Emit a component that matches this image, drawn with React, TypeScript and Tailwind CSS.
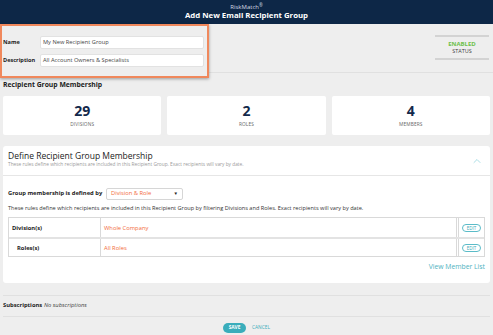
import { ChevronUp } from "lucide-react";

const stats = [
  { value: "29", label: "DIVISIONS" },
  { value: "2", label: "ROLES" },
  { value: "4", label: "MEMBERS" },
];

const rules = [
  { label: "Division(s)", value: "Whole Company", indent: false },
  { label: "Roles(s)", value: "All Roles", indent: true },
];

export default function App() {
  return (
    <div className="w-[493px] h-[335px] overflow-hidden bg-[#eeeeee] text-[#222] font-['Open_Sans',sans-serif]">
      {/* Title bar */}
      <div className="h-[24px] bg-[#0d2747] flex flex-col items-center justify-center text-white leading-none">
        <div className="text-[6px] text-[#d5dbe4]">
          RiskMatch<sup className="text-[4.5px]">®</sup>
        </div>
        <div className="text-[7.8px] font-bold mt-[2px]">Add New Email Recipient Group</div>
      </div>

      {/* Name / status */}
      <div className="flex justify-between items-start h-[49px] border-b border-[#e0e0e0]">
        <div className="w-[209px] h-[54px] border-2 border-[#f0885c] bg-[#eeeeee] shadow-[0_1px_3px_rgba(0,0,0,0.35)] flex flex-col justify-center gap-[5px] pl-[1px] pr-[3px] relative z-10">
          <div className="flex items-center">
            <span className="w-[37px] text-[5.6px] font-bold whitespace-nowrap">Name</span>
            <div className="flex-1 h-[13px] bg-white rounded-[2px] border border-[#e2e2e2] flex items-center px-[2px] text-[5.7px] text-[#444]">
              My New Recipient Group
            </div>
          </div>
          <div className="flex items-center">
            <span className="w-[37px] text-[5.6px] font-bold whitespace-nowrap">Description</span>
            <div className="flex-1 h-[13px] bg-white rounded-[2px] border border-[#e2e2e2] flex items-center px-[2px] text-[5.7px] text-[#444]">
              All Account Owners &amp; Specialists
            </div>
          </div>
        </div>
        <div className="w-[54px] mr-[4px] mt-[11px] border-y-2 border-[#d3d3d3] h-[25px] flex flex-col items-center justify-center leading-none">
          <span className="text-[6px] font-bold text-[#6cc04a]">ENABLED</span>
          <span className="text-[5.5px] text-[#444] mt-[2px]">STATUS</span>
        </div>
      </div>

      <div className="px-[3px] pt-[9px] text-[6.8px] font-bold leading-none">Recipient Group Membership</div>

      {/* Counters */}
      <div className="grid grid-cols-3 gap-[6px] px-[3px] mt-[7px]">
        {stats.map((s) => (
          <div key={s.label} className="h-[39px] bg-white rounded-[2px] flex flex-col items-center justify-center leading-none">
            <span className="text-[14px] font-bold text-[#13294b]">{s.value}</span>
            <span className="text-[4.8px] text-[#666] mt-[4px] tracking-wide">{s.label}</span>
          </div>
        ))}
      </div>

      {/* Define membership card */}
      <div className="mx-[3px] mt-[11px] h-[137px] bg-white rounded-[3px]">
        <div className="h-[30px] border-b border-[#e6e6e6] px-[5px] pt-[6px] flex justify-between leading-none">
          <div>
            <div className="text-[8.5px] text-[#222]">Define Recipient Group Membership</div>
            <div className="text-[4.8px] text-[#9a9a9a] mt-[2px]">
              These rules define which recipients are included in this Recipient Group. Exact recipients will vary by date.
            </div>
          </div>
          <ChevronUp className="w-[12px] h-[12px] text-[#8fd3dc] mt-[3px] mr-[2px]" strokeWidth={1.5} />
        </div>

        <div className="px-[5px]">
          <div className="flex items-center mt-[12px]">
            <span className="text-[5.8px] font-bold w-[98px] whitespace-nowrap">Group membership is defined by</span>
            <div className="w-[77px] h-[12px] border border-[#d6d6d6] rounded-[2px] flex items-center justify-between px-[4px] text-[5.8px] text-[#f26b3a]">
              Division &amp; Role
              <span className="text-[4.5px] text-[#222]">▼</span>
            </div>
          </div>
          <div className="text-[5.6px] text-[#333] mt-[6px] leading-none whitespace-nowrap">
            These rules define which recipients are included in this Recipient Group by filtering Divisions and Roles. Exact recipients will vary by date.
          </div>

          <div className="mt-[6px] border border-[#d9d9d9]">
            {rules.map((r, i) => (
              <div key={r.label} className={`flex h-[19px] ${i > 0 ? "border-t-2 border-[#e3e3e3]" : ""}`}>
                <div className={`w-[92px] border-r border-[#d9d9d9] flex items-center text-[5.8px] font-bold ${r.indent ? "pl-[8px]" : "pl-[3px]"}`}>
                  {r.label}
                </div>
                <div className="flex-1 flex items-center pl-[3px] text-[5.8px] text-[#f26b3a]">{r.value}</div>
                <div className="w-[28px] border-l-[3px] border-double border-[#d9d9d9] flex items-center justify-center">
                  <span className="h-[8px] px-[4px] rounded-full border border-[#5bbcc8] text-[4.5px] text-[#3aa8b6] flex items-center">EDIT</span>
                </div>
              </div>
            ))}
          </div>

          <div className="flex justify-end mt-[7px] text-[6.8px] text-[#4fb3c1] leading-none">View Member List</div>
        </div>
      </div>

      {/* Subscriptions */}
      <div className="mx-[3px] mt-[12px] border-y border-[#e0e0e0] h-[22px] flex items-center text-[5.8px] whitespace-nowrap">
        <span className="font-bold w-[41px]">Subscriptions</span>
        <span className="italic text-[#444]">No subscriptions</span>
      </div>

      <div className="flex justify-center items-center gap-[6px] mt-[6px]">
        <span className="h-[10px] w-[23px] rounded-full bg-[#3aadbb] text-white text-[4.8px] font-bold flex items-center justify-center">SAVE</span>
        <span className="text-[4.8px] text-[#3aadbb]">CANCEL</span>
      </div>
    </div>
  );
}
